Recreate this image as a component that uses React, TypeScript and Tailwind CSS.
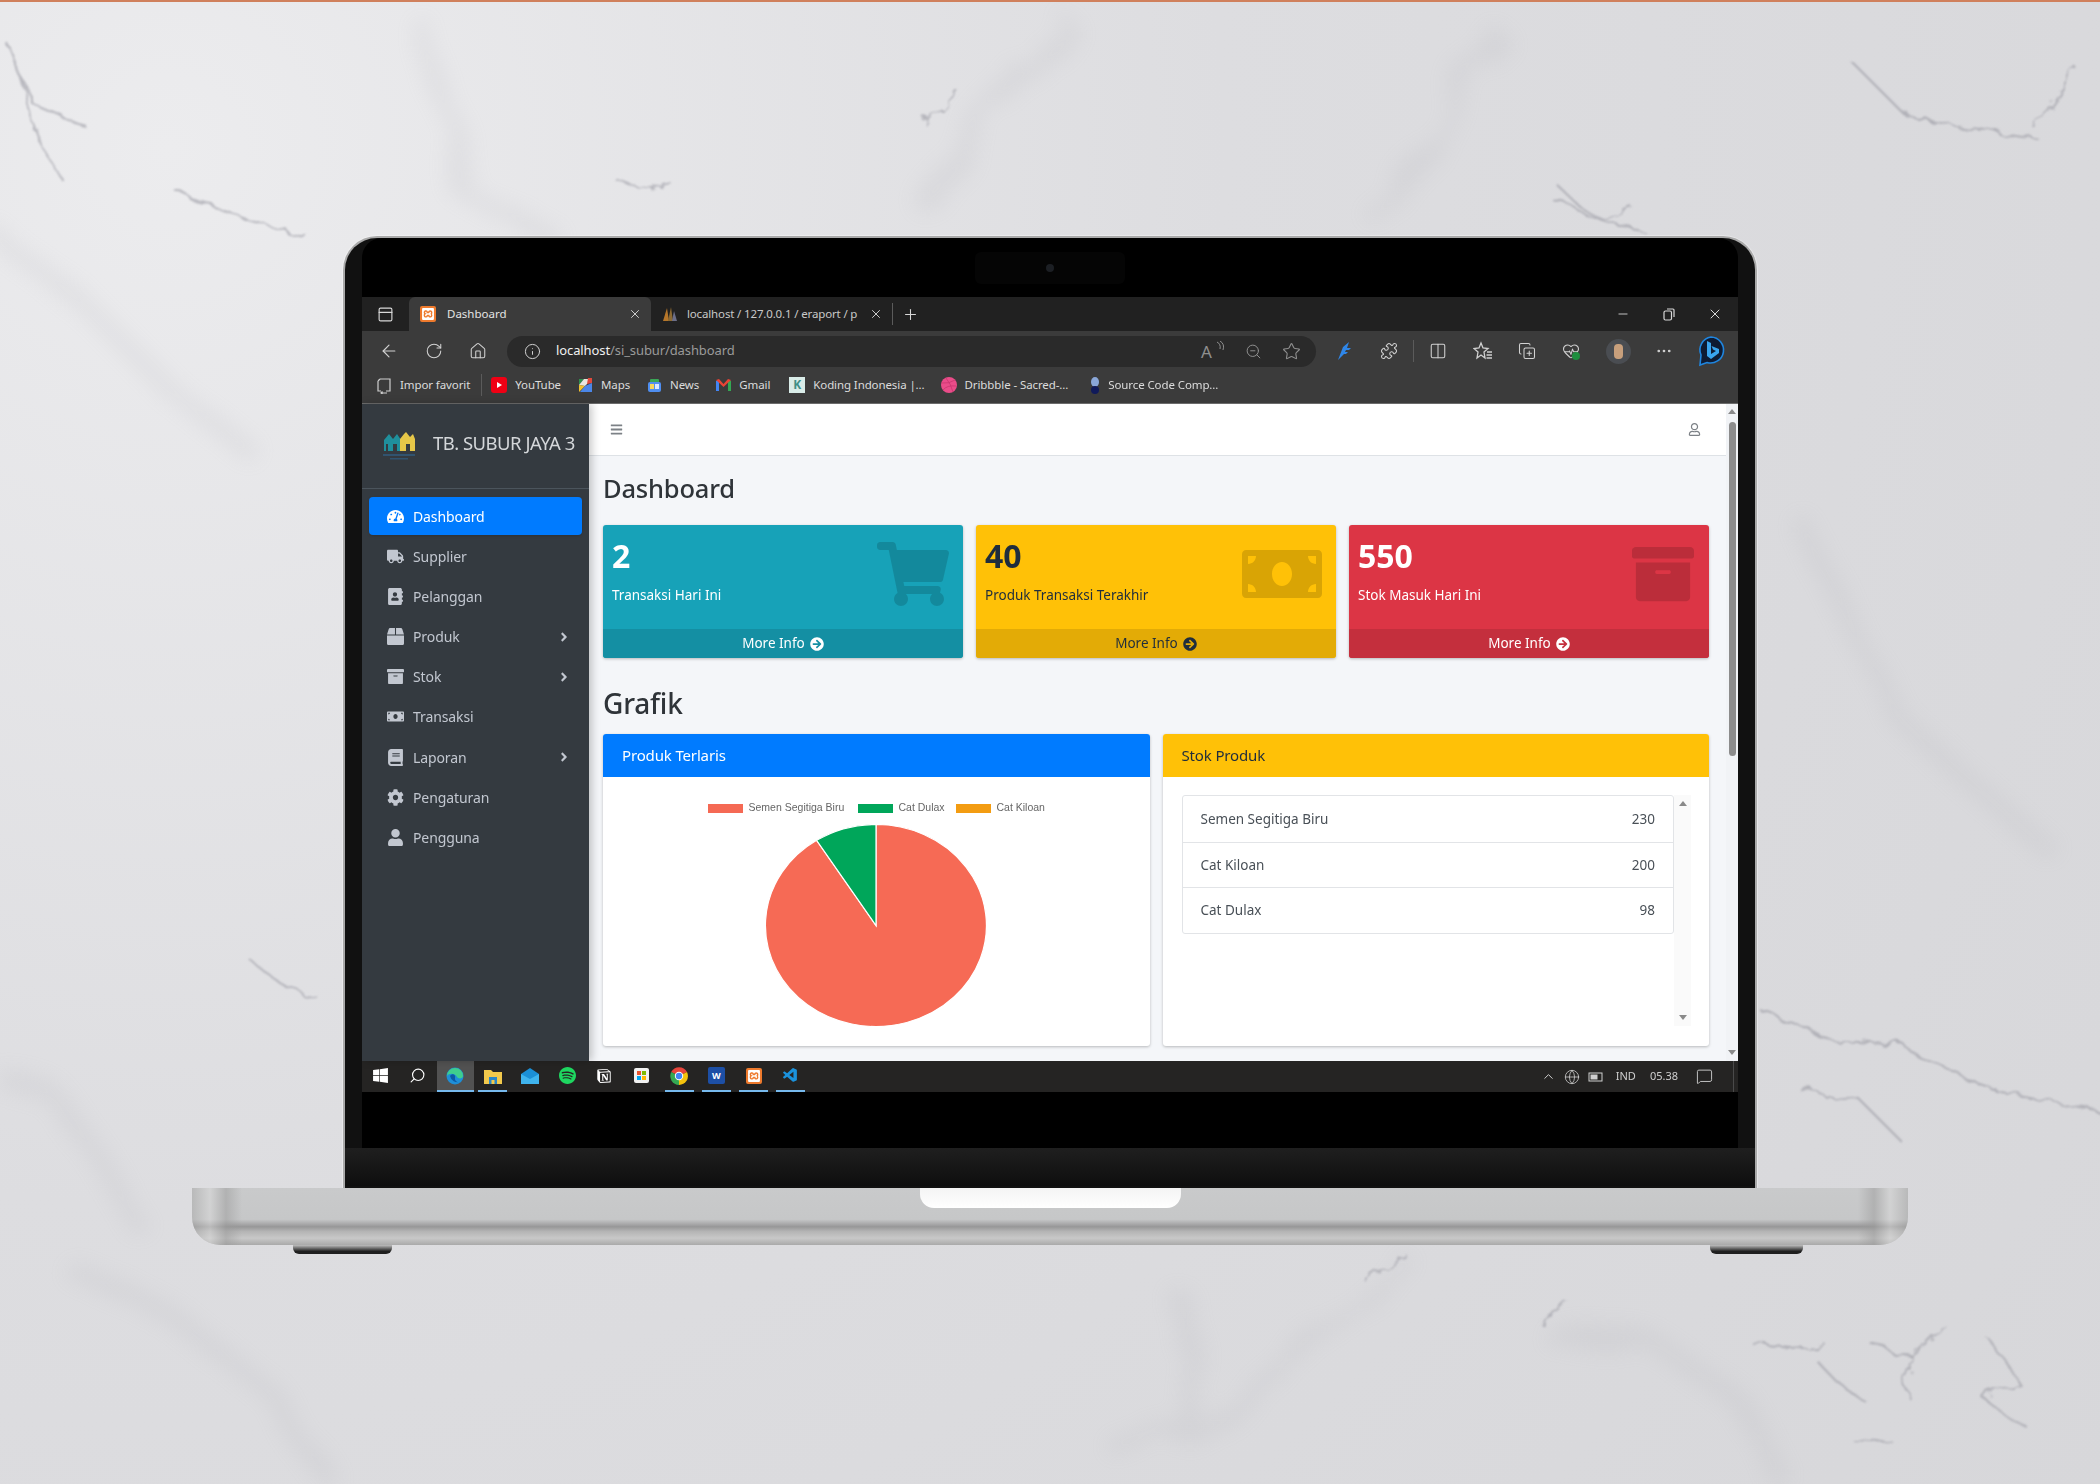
import type { ReactNode } from 'react'
import {
  ArrowLeft,
  ChevronUp,
  Columns2,
  CopyPlus,
  Ellipsis,
  HeartPulse,
  House,
  Info,
  MessageSquare,
  Minus,
  PanelTop,
  Plus,
  Puzzle,
  RotateCw,
  Search,
  Star,
  X,
  ZoomOut,
  Globe,
} from 'lucide-react'
import {
  FaAddressBook,
  FaAngleRight,
  FaArchive,
  FaArrowCircleRight,
  FaBars,
  FaBook,
  FaBox,
  FaCog,
  FaMoneyBill,
  FaRegUser,
  FaShoppingCart,
  FaTachometerAlt,
  FaTruck,
  FaUser,
  FaWindows,
} from 'react-icons/fa'
import { SiNotion, SiSpotify, SiXampp } from 'react-icons/si'
import { VscVscode } from 'react-icons/vsc'

const sideItems = [
  { label: 'Dashboard', icon: <FaTachometerAlt />, active: true },
  { label: 'Supplier', icon: <FaTruck /> },
  { label: 'Pelanggan', icon: <FaAddressBook /> },
  { label: 'Produk', icon: <FaBox />, more: true },
  { label: 'Stok', icon: <FaArchive />, more: true },
  { label: 'Transaksi', icon: <FaMoneyBill /> },
  { label: 'Laporan', icon: <FaBook />, more: true },
  { label: 'Pengaturan', icon: <FaCog /> },
  { label: 'Pengguna', icon: <FaUser /> },
]

const stock = [
  { name: 'Semen Segitiga Biru', qty: 230 },
  { name: 'Cat Kiloan', qty: 200 },
  { name: 'Cat Dulax', qty: 98 },
]

function Marble() {
  const dark = [
    'M7 43 L20 75 L30 110 L45 150 L62 180',
    'M14 60 L34 105 L87 127',
    'M957 90 L940 110 L924 123',
    'M1560 188 L1578 205 L1600 217 L1630 205',
    'M1553 200 L1600 218 L1647 234',
    'M616 180 L640 190 L670 182',
    'M174 190 L230 215 L308 237',
    'M2076 67 L2050 105 L2036 130',
    'M1407 1255 L1367 1283',
    'M1570 1303 L1536 1320',
    'M1752 1343 L1790 1348 L1827 1345',
    'M1864 1337 L1890 1350 L1914 1357 L1905 1380 L1911 1400',
    'M1945 1325 L1914 1357',
    'M1816 1360 L1835 1380 L1867 1403',
    'M1850 1437 L1870 1438 L1894 1443',
    'M1760 1010 L1830 1040 L1900 1045 L1990 1090 L2100 1110',
    'M1800 1090 L1860 1100 L1900 1140',
    'M1850 60 L1900 110 L1950 125 L2040 140',
    'M1990 1340 L2020 1385 L1985 1400 L2030 1430',
    'M250 960 L290 990 L320 1000',
  ]
  const faint = [
    'M1071 20 L990 100 L930 220',
    'M1407 1255 L1319 1330 L1286 1370 L1232 1413 L1110 1450',
    'M420 20 L470 200 L560 240',
    'M0 240 L80 300 L160 380 L250 450',
    'M1540 1330 L1650 1340 L1740 1400 L1780 1480',
    'M1500 30 L1450 100 L1380 230',
    'M0 1080 L60 1100 L120 1190 L140 1230',
    'M60 1260 L190 1330 L280 1400 L330 1484',
    'M1800 520 L1900 720 L2060 860',
    'M1190 1300 L1180 1440',
  ]
  return (
    <svg className="absolute inset-0 h-full w-full" viewBox="0 0 2100 1484" aria-hidden>
      <defs>
        <filter id="vein" x="-5%" y="-5%" width="110%" height="110%">
          <feTurbulence type="fractalNoise" baseFrequency="0.045" numOctaves="3" seed="4" />
          <feDisplacementMap in="SourceGraphic" scale="22" />
          <feGaussianBlur stdDeviation="0.8" />
        </filter>
        <filter id="wide" x="-5%" y="-5%" width="110%" height="110%">
          <feTurbulence type="fractalNoise" baseFrequency="0.012" numOctaves="3" seed="9" />
          <feDisplacementMap in="SourceGraphic" scale="50" />
          <feGaussianBlur stdDeviation="10" />
        </filter>
      </defs>
      <g fill="none" stroke="#a4a4ac" strokeWidth="18" opacity="0.13" filter="url(#wide)">
        {faint.map((d) => <path key={d} d={d} />)}
      </g>
      <g fill="none" stroke="#8e8e98" strokeWidth="2" opacity="0.55" filter="url(#vein)">
        {dark.map((d) => <path key={d} d={d} />)}
      </g>
    </svg>
  )
}

function Logo() {
  return (
    <svg className="translate-y-[3px]" width="38" height="30" viewBox="0 0 38 30" aria-hidden>
      <path d="M4 20 V9 L9 3 L13 8 L17 3 L21 9 V20 H17 V13 H13 V20 H8 V13 H6 V20 Z" fill="#1f8f9c" />
      <path d="M20 20 V8 L24 3 L26 1 L30 6 L33 3 L35 8 V20 H30 V13 H26 V20 Z" fill="#e5c648" />
      <rect x="3" y="23" width="32" height="2" fill="#31536f" />
      <rect x="10" y="27" width="18" height="1.5" fill="#31536f" />
    </svg>
  )
}

function ReadAloud() {
  return (
    <span className="relative flex h-5 w-6 items-center text-[17px] leading-none text-[#8f8f8f]">
      A
      <svg className="absolute right-0 top-0" width="9" height="10" viewBox="0 0 9 10" fill="none" stroke="#8f8f8f">
        <path d="M1 1 Q5 3 4 8" />
        <path d="M4 0 Q9 3 7 9" />
      </svg>
    </span>
  )
}

function FavList() {
  return (
    <svg width="20" height="20" viewBox="0 0 20 20" fill="none" stroke="#d0d0d0" strokeWidth="1.3">
      <path d="M8 2 L10 7 L15 7.5 L11 11 L12 17 L8 14 L4 17 L5 11 L1 7.5 L6 7 Z" />
      <path d="M14 11 H19 M13.5 14 H19 M13.5 17 H19" />
    </svg>
  )
}

function MapsIcon() {
  return (
    <svg width="15" height="16" viewBox="0 0 15 16">
      <path d="M1 2 L6 2 L1 8 Z" fill="#2f8f4e" />
      <path d="M6 2 L14 2 L7 9 L1 8 Z" fill="#e8e6df" />
      <path d="M10 1 L14 1 L14 6 L9 7 Z" fill="#e0493c" />
      <path d="M1 8 L7 9 L1 15 Z" fill="#f2c230" />
      <path d="M7 9 L14 6 V15 H2 Z" fill="#4a86e8" />
    </svg>
  )
}

function NewsIcon() {
  return (
    <svg width="15" height="15" viewBox="0 0 15 15">
      <rect x="3" y="1" width="9" height="4" rx="1" fill="#3aa757" />
      <rect x="1" y="4" width="13" height="10" rx="2" fill="#4f8ef0" />
      <rect x="3" y="6" width="4" height="5" fill="#f8d75c" />
      <rect x="8" y="6" width="4" height="5" fill="#d9e8ff" />
    </svg>
  )
}

function GmailIcon() {
  return (
    <svg width="15" height="12" viewBox="0 0 15 12">
      <path d="M0 2 L3 1 V12 H0 Z" fill="#4285f4" />
      <path d="M12 1 L15 2 V12 H12 Z" fill="#34a853" />
      <path d="M0 1 L3 0 L7.5 5 L12 0 L15 1 L7.5 8 Z" fill="#ea4335" />
    </svg>
  )
}

function DribbbleIcon() {
  return (
    <svg width="16" height="16" viewBox="0 0 16 16" fill="none" stroke="#c9356f" strokeWidth="0.8" aria-hidden>
      <circle cx="8" cy="8" r="8" fill="#ea4c89" stroke="none" />
      <path d="M5 1 Q10 7 12 15 M1 6 Q8 7 14 3 M2 13 Q6 8 15 9" />
    </svg>
  )
}

function ChromeIcon() {
  return (
    <svg width="18" height="18" viewBox="0 0 18 18" aria-hidden>
      <path d="M9 9 L1.2 5 A9 9 0 0 1 17 5 Z" fill="#e8453c" />
      <path d="M9 9 L17 5 A9 9 0 0 1 9 18 Z" fill="#f4c20d" />
      <path d="M9 9 L9 18 A9 9 0 0 1 1.2 5 Z" fill="#34a853" />
      <circle cx="9" cy="9" r="4.2" fill="#fff" />
      <circle cx="9" cy="9" r="3.2" fill="#4285f4" />
    </svg>
  )
}

function ImportIcon() {
  return (
    <svg width="16" height="17" viewBox="0 0 16 17" fill="none" stroke="#cfcfcf" strokeWidth="1.2">
      <path d="M4 2 H14 V14 H10 M2 4 V14 H5 M2 4 L4 2" />
      <path d="M5 16 H11 M6.5 14.5 L5 16 L6.5 17" />
    </svg>
  )
}

function Favicon({ children, className }: { children?: ReactNode; className: string }) {
  return (
    <span className={'flex h-[16px] w-[16px] shrink-0 items-center justify-center ' + className}>
      {children}
    </span>
  )
}

function Bookmark({ icon, label, className = '' }: { icon: ReactNode; label: string; className?: string }) {
  return (
    <div className={'flex shrink-0 items-center gap-[8px] ' + className}>
      {icon}
      <span className="whitespace-nowrap text-[11.5px] tracking-[-0.1px] text-[#dcdcdc]">{label}</span>
    </div>
  )
}

function RestoreIcon() {
  return (
    <svg width="12" height="13" viewBox="0 0 12 13" fill="none" stroke="#d8d8d8" strokeWidth="1.2">
      <rect x="1" y="3" width="7.5" height="9" rx="1.5" />
      <path d="M4 1 H10 Q11 1 11 2 V9" />
    </svg>
  )
}

function TabBar() {
  return (
    <div className="flex h-[34px] items-end bg-[#212121] text-[#d8d8d8]">
      <div className="flex h-[34px] w-[47px] items-center justify-center">
        <PanelTop size={17} strokeWidth={1.6} />
      </div>
      <div className="flex h-[34px] w-[242px] items-center rounded-t-[6px] bg-[#3b3b3b] pl-[11px] pr-[9px]">
        <Favicon className="rounded-[2px] bg-[#ee7a2d] text-white">
          <SiXampp size={12} />
        </Favicon>
        <span className="ml-[11px] text-[11.5px] text-[#e4e4e4]">Dashboard</span>
        <X className="ml-auto" size={14} strokeWidth={1.6} />
      </div>
      <div className="flex h-[34px] shrink-0 items-center pl-[11px]">
        <svg width="16" height="16" viewBox="0 0 16 16" aria-hidden>
          <path d="M1 15 L5 2 L7 15 Z" fill="#b5762a" />
          <path d="M6 15 L9 1 L11 15 Z" fill="#8c6a33" />
          <path d="M10 15 L12 5 L15 15 Z" fill="#6c6f8a" />
        </svg>
        <span className="ml-[9px] w-[178px] shrink-0 whitespace-nowrap text-[11.5px] tracking-[-0.15px] text-[#c9c9c9]">
          localhost / 127.0.0.1 / eraport / p
        </span>
        <X className="ml-[4px] shrink-0" size={14} strokeWidth={1.6} />
        <span className="ml-[9px] h-[22px] w-px shrink-0 bg-[#5b5b5b]" />
        <Plus className="ml-[9px] shrink-0" size={17} strokeWidth={1.5} />
      </div>
      <div className="ml-auto flex h-[34px] items-center">
        <div className="flex w-[46px] justify-center"><Minus size={14} strokeWidth={1.5} /></div>
        <div className="flex w-[46px] justify-center"><RestoreIcon /></div>
        <div className="flex w-[46px] justify-center"><X size={16} strokeWidth={1.5} /></div>
      </div>
    </div>
  )
}

function Slot({ children, className = '' }: { children: ReactNode; className?: string }) {
  return <div className={'flex w-[44px] shrink-0 justify-center ' + className}>{children}</div>
}

function Toolbar() {
  return (
    <div className="flex h-[38px] items-center bg-[#3b3b3b] pl-[5px] pt-[2px] text-[#d2d2d2]">
      <Slot><ArrowLeft size={20} strokeWidth={1.4} /></Slot>
      <Slot className="ml-px"><RotateCw size={18} strokeWidth={1.4} /></Slot>
      <Slot><House size={18} strokeWidth={1.4} /></Slot>
      <div className="ml-[7px] flex h-[31px] w-[809px] items-center rounded-full bg-[#2a2a2a] pl-[17px] pr-[15px]">
        <Info size={17} strokeWidth={1.4} />
        <span className="ml-[15px] text-[13px] tracking-[-0.1px] text-[#f0f0f0]">
          localhost<span className="text-[#9a9a9a]">/si_subur/dashboard</span>
        </span>
        <div className="ml-auto flex items-center gap-[20px] text-[#8f8f8f]">
          <ReadAloud />
          <ZoomOut size={17} strokeWidth={1.4} />
          <Star size={19} strokeWidth={1.4} />
        </div>
      </div>
      <Slot className="ml-[7px]">
        <svg width="18" height="20" viewBox="0 0 18 20" aria-hidden>
          <path d="M2 19 L7 6 L13 1 L11 7 H15 L13 9 H10 L9 11 H12 L10 13 H8 Z" fill="#2f86e8" />
        </svg>
      </Slot>
      <Slot><Puzzle size={18} strokeWidth={1.4} /></Slot>
      <span className="ml-[2px] mr-[2px] h-[22px] w-px bg-[#5b5b5b]" />
      <Slot><Columns2 size={18} strokeWidth={1.4} /></Slot>
      <Slot className="ml-px"><FavList /></Slot>
      <Slot><CopyPlus size={18} strokeWidth={1.4} /></Slot>
      <Slot>
        <span className="relative flex">
          <HeartPulse size={18} strokeWidth={1.4} />
          <span className="absolute bottom-0 right-0 h-[8px] w-[8px] rounded-full bg-[#1e8e3e]" />
        </span>
      </Slot>
      <Slot className="ml-[3px]">
        <span className="flex h-[25px] w-[25px] items-center justify-center rounded-full bg-[#4a4d52]">
          <span className="h-[15px] w-[9px] rounded-[4px] bg-[#c79f7c]" />
        </span>
      </Slot>
      <Slot className="ml-[2px]"><Ellipsis size={18} strokeWidth={1.6} /></Slot>
      <Slot className="ml-[3px]">
        <svg width="30" height="32" viewBox="0 0 30 32" aria-hidden>
          <path d="M15 2 A13 13 0 1 1 11 27.5 L4 30 L5 20 A13 13 0 0 1 15 2 Z" fill="#0e1b33" stroke="#1f86e0" strokeWidth="1.6" />
          <path d="M11 6 L15 8 V19 L20 16 L17 14.5 L15.5 11 L23 14 V18 L15 24 L11 21 Z" fill="#39a4ee" />
        </svg>
      </Slot>
    </div>
  )
}

function Bookmarks() {
  return (
    <div className="flex h-[35px] items-center border-b border-[#6c6c6c] bg-[#3b3b3b] pb-[2px] pl-[14px]">
      <Bookmark icon={<ImportIcon />} label="Impor favorit" />
      <span className="ml-[11px] h-[22px] w-px bg-[#5b5b5b]" />
      <div className="ml-[9px] flex items-center gap-[17px]">
        <Bookmark
          icon={
            <Favicon className="rounded-[3px] bg-[#f00014]">
              <span className="ml-[1px] h-0 w-0 border-y-[3.5px] border-l-[5px] border-y-transparent border-l-white" />
            </Favicon>
          }
          label="YouTube"
        />
        <Bookmark icon={<MapsIcon />} label="Maps" />
        <Bookmark icon={<NewsIcon />} label="News" />
        <Bookmark icon={<GmailIcon />} label="Gmail" />
        <Bookmark
          className="ml-[2px]"
          icon={
            <Favicon className="bg-[#d9ece8] text-[12px] font-bold leading-none text-[#3f8f86]">K</Favicon>
          }
          label="Koding Indonesia |..."
        />
        <Bookmark className="-ml-[1px]" icon={<DribbbleIcon />} label="Dribbble - Sacred-..." />
        <Bookmark
          className="ml-[5px]"
          icon={
            <svg width="10" height="17" viewBox="0 0 10 17" aria-hidden>
              <ellipse cx="5" cy="5" rx="4" ry="5" fill="#8aa7d8" />
              <ellipse cx="5" cy="13" rx="4" ry="4" fill="#101a5a" />
            </svg>
          }
          label="Source Code Comp..."
        />
      </div>
    </div>
  )
}

function Sidebar() {
  return (
    <aside className="relative z-10 flex w-[227px] shrink-0 flex-col bg-[#343a40] shadow-[3px_0_8px_rgba(0,0,0,0.22)]">
      <div className="flex h-[85px] items-center border-b border-[#4b545c] pb-[6px] pl-[18px]">
        <Logo />
        <span className="ml-[15px] whitespace-nowrap text-[18.5px] tracking-[-0.5px] text-[#d4d7da]">TB. SUBUR JAYA 3</span>
      </div>
      <nav className="flex flex-col gap-[2.2px] px-[7px] pt-[8px]">
        {sideItems.map((item) => (
          <div
            key={item.label}
            className={
              item.active
                ? 'flex h-[38px] items-center rounded-[4px] bg-[#007bff] text-white shadow-sm'
                : 'flex h-[38px] items-center rounded-[4px] text-[#c2c7d0]'
            }
          >
            <span className="flex w-[44px] justify-center pl-[8px] text-[17px]">{item.icon}</span>
            <span className="text-[14px] tracking-[-0.1px]">{item.label}</span>
            {item.more && <FaAngleRight className="ml-auto mr-[11px] text-[14px]" />}
          </div>
        ))}
      </nav>
    </aside>
  )
}

function StatCard({
  value,
  label,
  bg,
  foot,
  dark,
  icon,
}: {
  value: number
  label: string
  bg: string
  foot: string
  dark?: boolean
  icon: ReactNode
}) {
  return (
    <div className={'overflow-hidden rounded-[3px] shadow-[0_1px_3px_rgba(0,0,0,0.25)] ' + bg + (dark ? ' text-[#1f2d3d]' : ' text-white')}>
      <div className="flex h-[104px] justify-between pl-[9px] pr-[14px]">
        <div className="pt-[10px]">
          <div className="text-[32px] font-bold leading-[42px]">{value}</div>
          <div className="mt-[8px] text-[13.5px] leading-[20px]">{label}</div>
        </div>
        <div className="flex items-center pb-[6px] text-black/15">{icon}</div>
      </div>
      <div className={'flex h-[29px] items-center justify-center gap-[5px] text-[13.5px] ' + foot}>
        More Info <FaArrowCircleRight className="text-[14px]" />
      </div>
    </div>
  )
}

function PieChart() {
  return (
    <div className="flex flex-col items-center pt-[26px]">
      <div className="flex h-[10px] items-center text-[10.5px] text-[#666] font-['Liberation_Sans',sans-serif]">
        <span className="h-[9px] w-[35px] bg-[#f56954]" />
        <span className="ml-[6px] w-[109px]">Semen Segitiga Biru</span>
        <span className="h-[9px] w-[35px] bg-[#00a65a]" />
        <span className="ml-[6px] w-[57px]">Cat Dulax</span>
        <span className="h-[9px] w-[35px] bg-[#f39c12]" />
        <span className="ml-[6px]">Cat Kiloan</span>
      </div>
      <svg className="mt-[11px]" width="222" height="203" viewBox="0 0 222 203" aria-label="Produk Terlaris">
        <path d="M111 101.5 L111 0.5 A110.5 101 0 1 1 51.6 16.3 Z" fill="#f66a55" stroke="#fff" strokeWidth="1.2" />
        <path d="M111 101.5 L51.6 16.3 A110.5 101 0 0 1 111 0.5 Z" fill="#00a65a" stroke="#fff" strokeWidth="1.2" />
      </svg>
    </div>
  )
}

function StockList() {
  return (
    <div className="flex h-[231px] pl-[19px] pr-[18px]">
      <div className="flex-1">
        <ul className="rounded-[3px] border border-[#e2e4e7] text-[13.5px] text-[#495057]">
          {stock.map((row, i) => (
            <li
              key={row.name}
              className={
                i === 0
                  ? 'flex h-[45.5px] items-center justify-between px-[18px]'
                  : 'flex h-[45.5px] items-center justify-between border-t border-[#e2e4e7] px-[18px]'
              }
            >
              <span>{row.name}</span>
              <span>{row.qty}</span>
            </li>
          ))}
        </ul>
      </div>
      <div className="flex w-[17px] flex-col items-center justify-between bg-[#fafafa] py-[6px]">
        <span className="h-0 w-0 border-x-[4px] border-b-[5px] border-x-transparent border-b-[#8a8a8a]" />
        <span className="h-0 w-0 border-x-[4px] border-t-[5px] border-x-transparent border-t-[#8a8a8a]" />
      </div>
    </div>
  )
}

function Panel({
  title,
  head,
  children,
}: {
  title: string
  head: string
  children: ReactNode
}) {
  return (
    <div className="h-[312px] overflow-hidden rounded-[3px] bg-white shadow-[0_1px_3px_rgba(0,0,0,0.25)]">
      <div className={'flex h-[43px] items-center px-[19px] text-[15px] tracking-[-0.15px] ' + head}>{title}</div>
      {children}
    </div>
  )
}

function Content() {
  return (
    <div className="flex min-w-0 flex-1">
      <div className="flex min-w-0 flex-1 flex-col bg-[#f4f6f9]">
        <div className="flex h-[52px] shrink-0 items-center justify-between border-b border-[#dee2e6] bg-white pl-[21px] pr-[25px] text-[#7c8186]">
          <FaBars className="text-[13px]" />
          <FaRegUser className="text-[13px]" />
        </div>
        <div className="pl-[14px] pr-[17px]">
          <h1 className="mt-[14px] text-[25.5px] font-medium leading-[36px] tracking-[-0.2px] text-[#2f3439]">Dashboard</h1>
          <div className="mt-[19px] grid grid-cols-3 gap-[13px]">
            <StatCard
              value={2}
              label="Transaksi Hari Ini"
              bg="bg-[#17a2b8]"
              foot="bg-[#148fa3]"
              icon={<FaShoppingCart className="h-[66px] w-[72px]" />}
            />
            <StatCard
              value={40}
              label="Produk Transaksi Terakhir"
              bg="bg-[#ffc107]"
              foot="bg-[#e3ab06]"
              dark
              icon={<FaMoneyBill className="h-[64px] w-[80px]" />}
            />
            <StatCard
              value={550}
              label="Stok Masuk Hari Ini"
              bg="bg-[#dc3545]"
              foot="bg-[#c42f3d]"
              icon={<FaArchive className="h-[62px] w-[64px]" />}
            />
          </div>
          <h2 className="mt-[27px] text-[28px] font-medium leading-[36px] tracking-[-0.2px] text-[#2f3439]">Grafik</h2>
          <div className="mt-[13px] grid grid-cols-2 gap-[13px]">
            <Panel title="Produk Terlaris" head="bg-[#007bff] text-white">
              <PieChart />
            </Panel>
            <Panel title="Stok Produk" head="bg-[#ffc107] text-[#1f2d3d]">
              <div className="pt-[18px]">
                <StockList />
              </div>
            </Panel>
          </div>
        </div>
      </div>
      <div className="flex w-[12px] shrink-0 flex-col items-center bg-[#f1f3f6] pb-[6px] pt-[5px]">
        <span className="h-0 w-0 border-x-[4px] border-b-[5px] border-x-transparent border-b-[#8a8a8a]" />
        <span className="mt-[8px] h-[334px] w-[7px] rounded-full bg-[#8c8c8c]" />
        <span className="mt-auto h-0 w-0 border-x-[4px] border-t-[5px] border-x-transparent border-t-[#8a8a8a]" />
      </div>
    </div>
  )
}

function TaskIcon({ children, open, active }: { children: ReactNode; open?: boolean; active?: boolean }) {
  return (
    <div className={active ? 'flex h-[31px] w-[37.3px] flex-col items-center bg-[#525252]' : 'flex h-[31px] w-[37.3px] flex-col items-center'}>
      <div className="flex flex-1 items-center justify-center">{children}</div>
      <span className={open ? (active ? 'h-[2px] w-full bg-[#76b9ed]' : 'h-[2px] w-[29px] bg-[#76b9ed]') : 'h-[2px]'} />
    </div>
  )
}

function Taskbar() {
  return (
    <div className="flex h-[31px] items-center bg-[#252423] text-[#e6e6e6]">
      <TaskIcon><FaWindows size={17} className="text-white" /></TaskIcon>
      <TaskIcon><Search size={17} strokeWidth={1.6} className="-scale-x-100 text-white" /></TaskIcon>
      <TaskIcon open active>
        <svg width="18" height="18" viewBox="0 0 18 18" aria-hidden>
          <circle cx="9" cy="9" r="8.5" fill="#1e8fd8" />
          <path d="M1 9 A8 8 0 0 1 17 9 C17 12 12 12 11 10 C9 6 3 6 1 9 Z" fill="#3fce8e" />
          <path d="M4 9 C6 6 10 7 9 11 C8.5 14 12 16 14 15 A8 8 0 0 1 4 9 Z" fill="#0c59a4" />
        </svg>
      </TaskIcon>
      <TaskIcon open>
        <svg width="18" height="16" viewBox="0 0 18 16" aria-hidden>
          <path d="M0 2 H7 L9 4 H18 V16 H0 Z" fill="#f2c94c" />
          <rect x="5" y="9" width="8" height="7" fill="#2a86c8" />
          <rect x="7.5" y="12" width="3" height="4" fill="#f2c94c" />
        </svg>
      </TaskIcon>
      <TaskIcon>
        <svg width="18" height="16" viewBox="0 0 18 16" aria-hidden>
          <path d="M0 6 L9 0 L18 6 V16 H0 Z" fill="#1b8fd6" />
          <path d="M0 6 L9 11 L18 6 V16 H0 Z" fill="#3fb4ee" />
        </svg>
      </TaskIcon>
      <TaskIcon><SiSpotify size={17} className="text-[#1ed760]" /></TaskIcon>
      <TaskIcon><SiNotion size={14} className="text-white" /></TaskIcon>
      <TaskIcon>
        <span className="grid h-[15px] w-[15px] grid-cols-2 gap-[1px] rounded-[2px] bg-[#f1f1f1] p-[3px]">
          <span className="bg-[#e8542f]" />
          <span className="bg-[#7fba00]" />
          <span className="bg-[#00a4ef]" />
          <span className="bg-[#ffb900]" />
        </span>
      </TaskIcon>
      <TaskIcon open><ChromeIcon /></TaskIcon>
      <TaskIcon open>
        <span className="flex h-[17px] w-[17px] items-center justify-center rounded-[2px] bg-[#1d4fa5] text-[9px] font-bold text-white">W</span>
      </TaskIcon>
      <TaskIcon open>
        <span className="flex h-[16px] w-[16px] items-center justify-center rounded-[2px] bg-[#ee7a2d] text-white">
          <SiXampp size={12} />
        </span>
      </TaskIcon>
      <TaskIcon open><VscVscode size={17} className="text-[#1b92dc]" /></TaskIcon>
      <div className="ml-auto flex items-center text-[#cfcfcf]">
        <ChevronUp size={15} strokeWidth={1.6} />
        <Globe className="ml-[8px]" size={16} strokeWidth={1.2} />
        <svg className="ml-[7px]" width="17" height="11" viewBox="0 0 17 11" fill="none" stroke="#cfcfcf" aria-hidden>
          <rect x="2" y="2" width="13" height="8" />
          <rect x="4" y="4" width="6" height="4" fill="#cfcfcf" />
        </svg>
        <span className="ml-[12px] text-[11px]">IND</span>
        <span className="ml-[14px] text-[11px]">05.38</span>
        <MessageSquare className="ml-[18px]" size={17} strokeWidth={1.3} />
        <span className="ml-[20px] mr-[4px] h-[31px] w-px bg-[#4a4a4a]" />
      </div>
    </div>
  )
}

function Screen() {
  return (
    <div className="flex h-[795px] w-[1376px] shrink-0 flex-col overflow-hidden blur-[0.3px]">
      <TabBar />
      <Toolbar />
      <Bookmarks />
      <div className="flex min-h-0 flex-1">
        <Sidebar />
        <Content />
      </div>
      <Taskbar />
    </div>
  )
}

function Laptop() {
  return (
    <div className="relative flex flex-col items-center">
      <div className="flex h-[952px] w-[1414px] flex-col items-center rounded-t-[34px] border-x-2 border-t-2 border-[#a9a9a9] bg-[#111] shadow-[0_0_0_1px_rgba(255,255,255,0.35)]">
        <div className="flex h-[59px] w-[1376px] shrink-0 justify-center rounded-t-[20px] bg-black">
          <div className="flex h-[32px] w-[150px] translate-y-[14px] items-center justify-center rounded-[6px] bg-[#050505]">
            <span className="h-[8px] w-[8px] rounded-full bg-[#1c1f24]" />
          </div>
        </div>
        <Screen />
        <div className="h-[56px] w-[1376px] shrink-0 bg-black" />
        <div className="h-[38px] w-[1410px] shrink-0 bg-[linear-gradient(to_bottom,#1f1f1f,#0e0e0e)]" />
      </div>
      <div className="relative flex h-[57px] w-[1716px] justify-center overflow-hidden rounded-b-[28px] bg-[linear-gradient(to_bottom,#c9cacb_0%,#c6c7c8_55%,#979798_68%,#b4b4b4_76%,#c8c8c8_88%,#a9a9a9_100%)]">
        <div className="absolute inset-0 bg-[linear-gradient(to_right,#a9a9a9_0,#dcdcdc_18px,#9a9a9a_34px,transparent_50px,transparent_1666px,#9a9a9a_1682px,#dcdcdc_1698px,#a9a9a9_1716px)] opacity-50" />
        <div className="relative h-[20px] w-[261px] rounded-b-[14px] bg-[linear-gradient(to_bottom,#f4f4f4,#ffffff)]" />
      </div>
      <div className="flex h-[9px] w-[1716px] justify-between pl-[101px] pr-[105px]">
        <span className="h-[9px] w-[99px] rounded-b-[6px] bg-[linear-gradient(to_bottom,#c0c0c0,#1f1f1f_70%)]" />
        <span className="h-[9px] w-[93px] rounded-b-[6px] bg-[linear-gradient(to_bottom,#c0c0c0,#1f1f1f_70%)]" />
      </div>
    </div>
  )
}

export default function App() {
  return (
    <div className="relative h-[1484px] w-[2100px] overflow-hidden bg-[radial-gradient(circle_at_8%_10%,#ececee_0%,#dddde0_45%,#d7d7da_100%)] font-['Noto_Sans',sans-serif]">
      <Marble />
      <div className="relative h-[2px] bg-[#d0805c]" />
      <div className="relative flex justify-center pt-[234px]">
        <Laptop />
      </div>
    </div>
  )
}
